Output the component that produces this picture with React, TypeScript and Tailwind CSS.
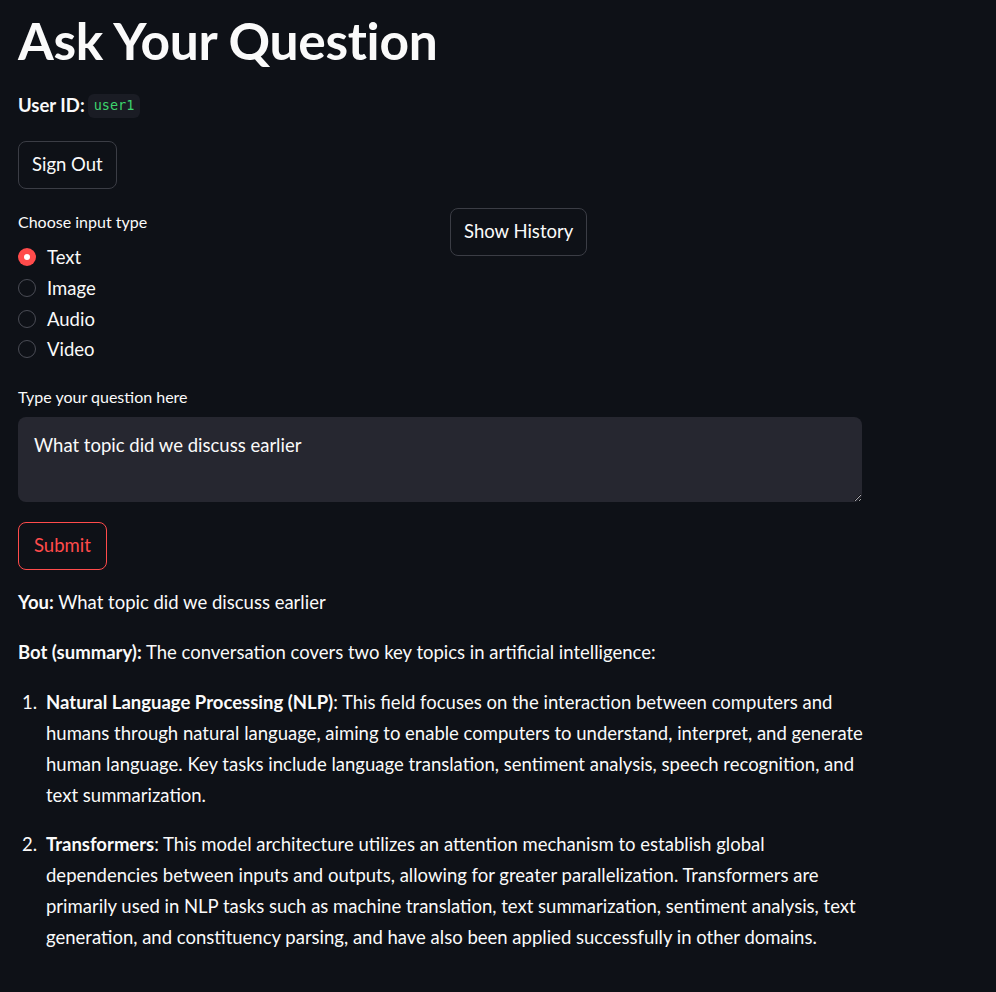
import React from "react";

const font = { fontFamily: "Lato, 'Noto Sans', sans-serif" };

function Radio({ label, checked }: { label: string; checked?: boolean }) {
  return (
    <div className="flex h-[30.7px] items-center gap-[11px]">
      {checked ? (
        <span className="flex h-[18px] w-[18px] items-center justify-center rounded-full bg-[#ff4b4b]">
          <span className="h-[6px] w-[6px] rounded-full bg-white" />
        </span>
      ) : (
        <span className="h-[18px] w-[18px] rounded-full border border-[#4a4c55]" />
      )}
      <span className="text-[18.5px] leading-[24px]">{label}</span>
    </div>
  );
}

const Line = ({ children }: { children: React.ReactNode }) => (
  <div className="whitespace-nowrap">{children}</div>
);

export default function App() {
  return (
    <div className="min-h-screen bg-[#0e1117] text-[#fafafa]" style={font}>
      <div className="flex w-[862px] flex-col pl-[18px]">
        <h1 className="h-[80px] text-[51.5px] font-bold leading-[80px] tracking-[-0.3px]">Ask Your Question</h1>

        <div className="mt-[10px] flex h-[31px] items-center">
          <span className="text-[18.5px] font-bold">User ID:</span>
          <span
            className="ml-[3px] flex h-[24px] items-center rounded-[6px] bg-[#1a1c24] px-[6px] text-[13.5px] text-[#3dd56d]"
            style={{ fontFamily: "'DejaVu Sans Mono', 'Liberation Mono', monospace" }}
          >
            user1
          </span>
        </div>

        <div className="mt-[20px]">
          <button className="h-[48px] rounded-[8px] border border-[#3b3d45] bg-[#0e1117] px-[13px] text-[18.5px] text-[#fafafa]">
            Sign Out
          </button>
        </div>

        <div className="mt-[19px] grid grid-cols-2 gap-[20px]">
          <div className="flex flex-col">
            <div className="text-[16px] leading-[28px]">Choose input type</div>
            <div className="mt-[6px] flex flex-col">
              <Radio label="Text" checked />
              <Radio label="Image" />
              <Radio label="Audio" />
              <Radio label="Video" />
            </div>
          </div>
          <div>
            <button className="h-[48px] rounded-[8px] border border-[#3b3d45] bg-[#0e1117] px-[13px] text-[18.5px] text-[#fafafa]">
              Show History
            </button>
          </div>
        </div>

        <div className="mt-[18px] text-[16px] leading-[28px]">Type your question here</div>
        <textarea
          className="mt-[6px] h-[85px] w-full rounded-[8px] bg-[#262730] px-[16px] pt-[15px] text-[18.5px] leading-[26px] text-[#fafafa] outline-none"
          style={font}
          defaultValue="What topic did we discuss earlier"
        />

        <div className="mt-[20px]">
          <button className="h-[48px] rounded-[8px] border border-[#ff4b4b] bg-[#0e1117] px-[15px] text-[18.5px] text-[#ff4b4b]">
            Submit
          </button>
        </div>

        <div className="mt-[17px] text-[18.5px] leading-[31px]">
          <p>
            <b>You:</b> What topic did we discuss earlier
          </p>
          <p className="mt-[19px]">
            <b>Bot (summary):</b> The conversation covers two key topics in artificial intelligence:
          </p>
          <ol className="mt-[19px] flex flex-col gap-[18px]">
            <li className="flex">
              <span className="w-[28px] shrink-0 pl-[4px]">1.</span>
              <div>
                <Line>
                  <b>Natural Language Processing (NLP)</b>: This field focuses on the interaction between computers and
                </Line>
                <Line>humans through natural language, aiming to enable computers to understand, interpret, and generate</Line>
                <Line>human language. Key tasks include language translation, sentiment analysis, speech recognition, and</Line>
                <Line>text summarization.</Line>
              </div>
            </li>
            <li className="flex">
              <span className="w-[28px] shrink-0 pl-[4px]">2.</span>
              <div>
                <Line>
                  <b>Transformers</b>: This model architecture utilizes an attention mechanism to establish global
                </Line>
                <Line>dependencies between inputs and outputs, allowing for greater parallelization. Transformers are</Line>
                <Line>primarily used in NLP tasks such as machine translation, text summarization, sentiment analysis, text</Line>
                <Line>generation, and constituency parsing, and have also been applied successfully in other domains.</Line>
              </div>
            </li>
          </ol>
        </div>
      </div>
    </div>
  );
}
